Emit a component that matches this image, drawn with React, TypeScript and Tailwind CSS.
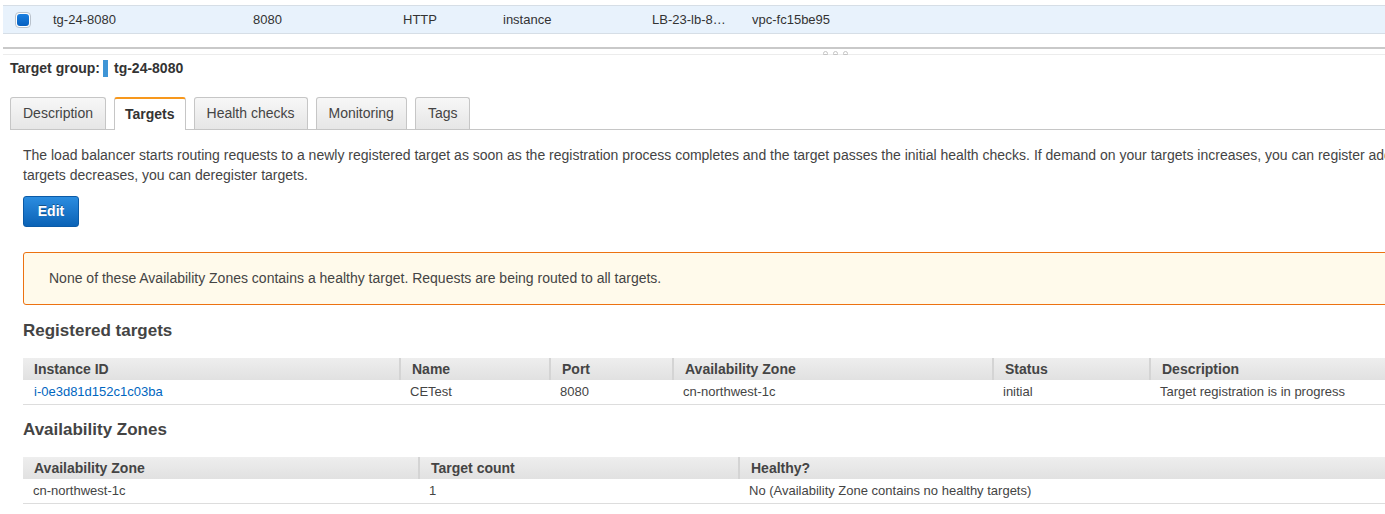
import React from 'react';

const tabs = ['Description', 'Targets', 'Health checks', 'Monitoring', 'Tags'];

const targetCols = [
  { label: 'Instance ID', w: 'w-[376px]' },
  { label: 'Name', w: 'w-[150px]' },
  { label: 'Port', w: 'w-[123px]' },
  { label: 'Availability Zone', w: 'w-[320px]' },
  { label: 'Status', w: 'w-[157px]' },
  { label: 'Description', w: 'flex-1' },
];

const zoneCols = [
  { label: 'Availability Zone', w: 'w-[395px]' },
  { label: 'Target count', w: 'w-[320px]' },
  { label: 'Healthy?', w: 'flex-1' },
];

const HeaderRow = ({ cols }: { cols: { label: string; w: string }[] }) => (
  <div className="flex h-[22px] bg-gradient-to-b from-[#eeeeee] to-[#e1e1e1] text-[14px] font-bold text-[#444]">
    {cols.map((c, i) => (
      <div
        key={c.label}
        className={`${c.w} flex items-center px-[11px] ${i > 0 ? 'border-l-2 border-[#d4d4d4]' : ''}`}
      >
        {c.label}
      </div>
    ))}
  </div>
);

export default function App() {
  return (
    <div className="w-full overflow-hidden bg-white font-['Liberation_Sans',Arial,sans-serif] text-[#444]">
      <div className="w-[1680px] pt-[5px] pl-[3px]">
        {/* selected row of the target group list */}
        <div className="flex h-[29px] items-center border-y border-[#d6dee6] bg-[#e8f2fc] text-[13px] text-[#333]">
          <div className="ml-[12px] mr-[22px] h-[16px] w-[16px] rounded-[4px] border border-[#b9c2cc] bg-white p-[1px]">
            <div className="h-full w-full rounded-[3px] bg-gradient-to-b from-[#1a7fe0] to-[#0660c0]" />
          </div>
          <span className="w-[200px]">tg-24-8080</span>
          <span className="w-[150px]">8080</span>
          <span className="w-[100px]">HTTP</span>
          <span className="w-[149px]">instance</span>
          <span className="w-[100px]">LB-23-lb-8…</span>
          <span>vpc-fc15be95</span>
        </div>

        {/* splitter */}
        <div className="mt-[13px] h-[2px] bg-[#c9c9c9]" />
        <div className="relative mt-[5px] h-[1px] bg-[#ececec]">
          <div className="absolute -top-[3px] left-[820px] flex gap-[5px]">
            <span className="h-[4px] w-[5px] rounded-t-full border border-[#c4c4c4]" />
            <span className="h-[4px] w-[5px] rounded-t-full border border-[#c4c4c4]" />
            <span className="h-[4px] w-[5px] rounded-t-full border border-[#c4c4c4]" />
          </div>
        </div>

        <div className="pl-[7px]">
          <div className="mt-[4px] flex h-[18px] items-center text-[14px] font-bold text-[#333]">
            <span>Target group:</span>
            <span className="ml-[3px] mr-[6px] h-[17px] w-[5px] bg-[#3f95d6]" />
            <span>tg-24-8080</span>
          </div>

          {/* tabs */}
          <div className="mt-[20px] flex h-[33px] items-end gap-[8px] border-b border-[#c6c6c6] text-[14px]">
            {tabs.map((t) =>
              t === 'Targets' ? (
                <div
                  key={t}
                  className="-mb-px flex h-[33px] items-center rounded-t-[3px] border-x border-t-2 border-x-[#c6c6c6] border-t-[#f7981d] bg-white px-[10px] font-bold text-[#333]"
                >
                  {t}
                </div>
              ) : (
                <div
                  key={t}
                  className="flex h-[32px] items-center rounded-t-[3px] border-x border-t border-[#c6c6c6] bg-gradient-to-b from-[#f7f7f7] to-[#e6e6e6] px-[12px] text-[#444]"
                >
                  {t}
                </div>
              )
            )}
          </div>

          <div className="pl-[13px] pt-[15px]">
            <p className="w-[1600px] text-[14px] leading-[20px]">
              The load balancer starts routing requests to a newly registered target as soon as the registration
              process completes and the target passes the initial health checks. If demand on your targets increases,
              you can register additional targets. If demand on your targets decreases, you can deregister targets.
            </p>

            <button className="mt-[11px] h-[31px] w-[56px] rounded-[3px] border border-[#0b5aa6] bg-gradient-to-b from-[#2b8de0] to-[#0a62b6] text-[14px] font-bold text-white [text-shadow:0_-1px_0_rgba(0,0,0,0.35)]">
              Edit
            </button>

            <div className="mt-[25px] flex h-[53px] items-center rounded-[3px] border border-[#ec7211] bg-[#fffaeb] pl-[25px] text-[14px] text-[#444]">
              None of these Availability Zones contains a healthy target. Requests are being routed to all targets.
            </div>

            <h3 className="mt-[16px] text-[17px] font-bold leading-[20px] text-[#444]">Registered targets</h3>

            <div className="mt-[17px]">
              <HeaderRow cols={targetCols} />
              <div className="flex h-[25px] items-center border-b border-[#dddddd] text-[13px] text-[#444]">
                <div className="w-[376px] px-[11px] text-[#0066c0]">i-0e3d81d152c1c03ba</div>
                <div className="w-[150px] px-[11px]">CETest</div>
                <div className="w-[123px] px-[11px]">8080</div>
                <div className="w-[320px] px-[11px]">cn-northwest-1c</div>
                <div className="w-[157px] px-[11px]">initial</div>
                <div className="flex-1 px-[11px]">Target registration is in progress</div>
              </div>
            </div>

            <h3 className="mt-[15px] text-[17px] font-bold leading-[20px] text-[#444]">Availability Zones</h3>

            <div className="mt-[17px]">
              <HeaderRow cols={zoneCols} />
              <div className="flex h-[25px] items-center border-b border-[#dddddd] text-[13px] text-[#444]">
                <div className="w-[395px] px-[10px]">cn-northwest-1c</div>
                <div className="w-[320px] px-[11px]">1</div>
                <div className="flex-1 px-[11px]">No (Availability Zone contains no healthy targets)</div>
              </div>
            </div>
            <div className="h-[20px]" />
          </div>
        </div>
      </div>
    </div>
  );
}
